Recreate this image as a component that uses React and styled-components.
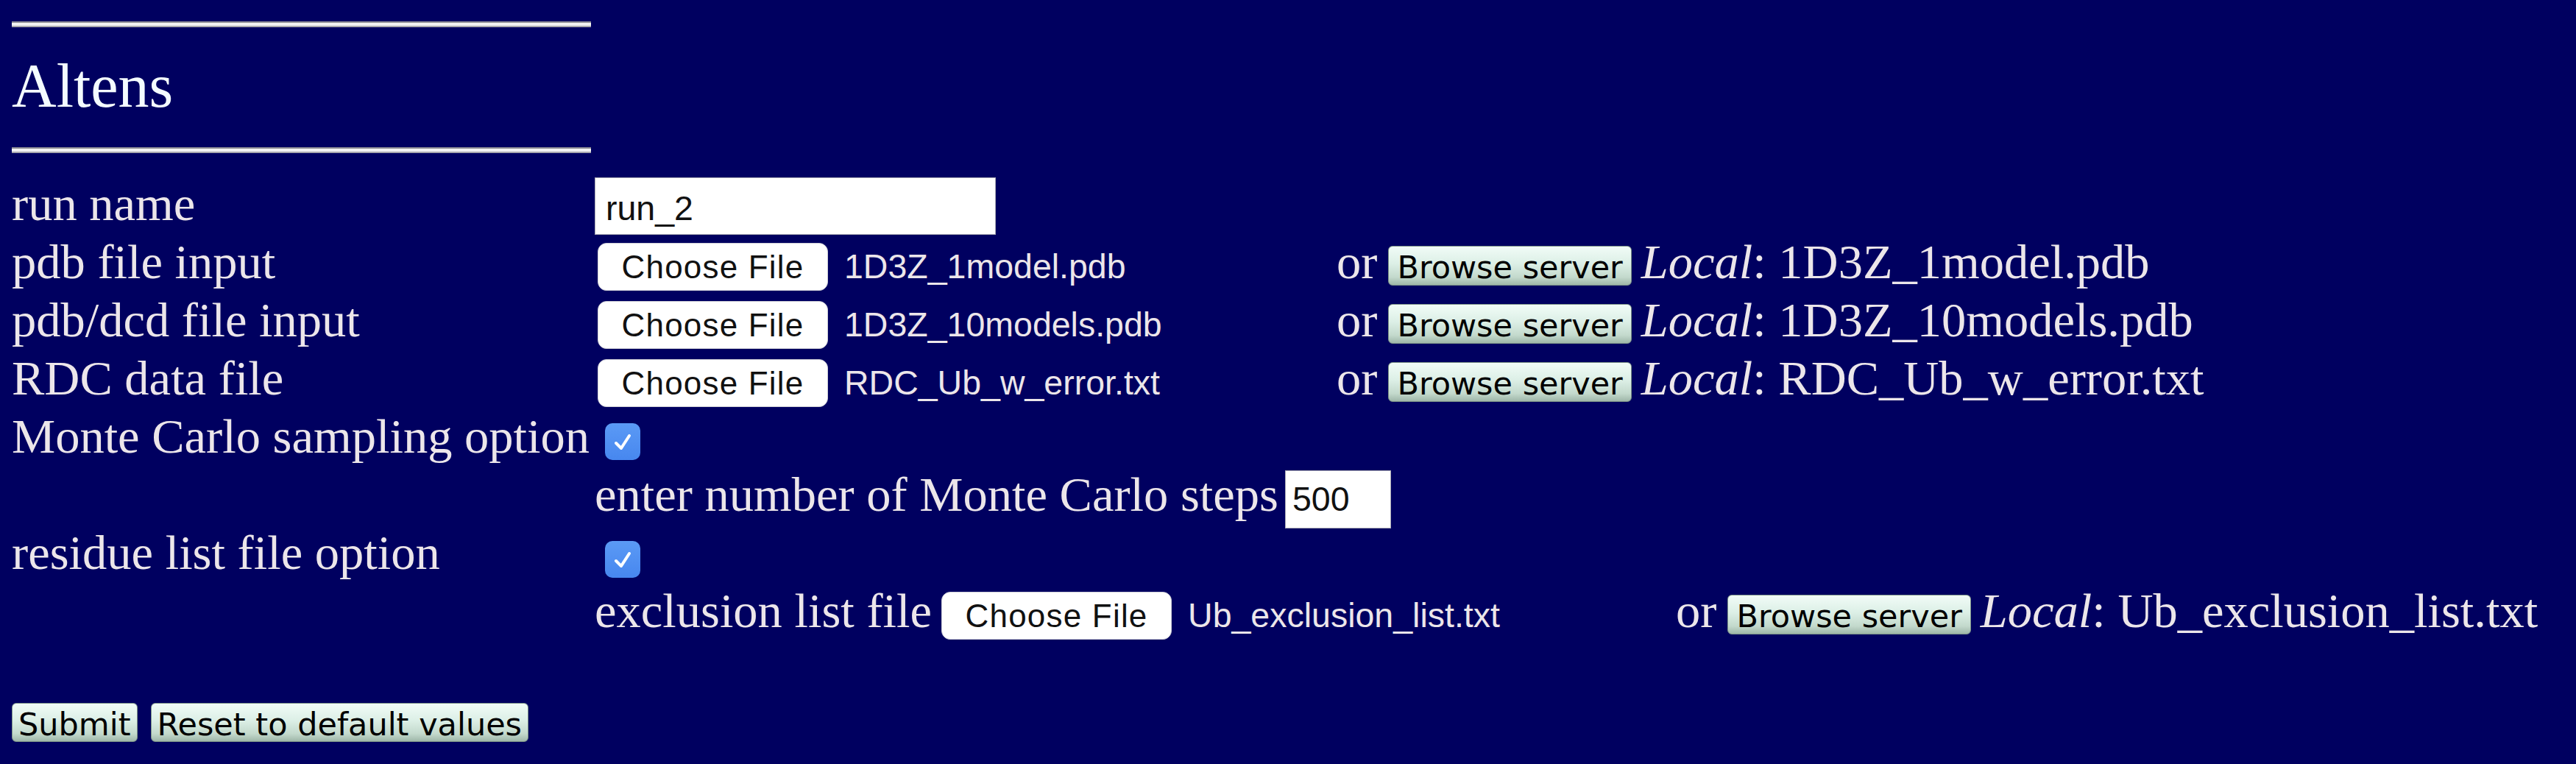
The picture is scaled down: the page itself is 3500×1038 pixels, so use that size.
import React from 'react'
import styled, { createGlobalStyle } from 'styled-components'

const GlobalStyle = createGlobalStyle`
  html, body {
    margin: 0;
    padding: 0;
    background: #000060;
  }
  body {
    font-family: "Liberation Serif", "Times New Roman", serif;
    color: #ece6ea;
  }
`

const Page = styled.div`
  min-height: 1038px;
  padding: 29px 0 0 16px;
  box-sizing: border-box;
`

const Rule = styled.hr`
  width: 787px;
  height: 8px;
  margin: 0;
  border: 0;
  background: linear-gradient(#8e8e96 0 2px, #f2f2f2 2px 6px, #a8a8ae 6px);
`

const Title = styled.h1`
  margin: 31px 0 35px;
  font-size: 84px;
  font-weight: normal;
  line-height: 97px;
  color: #f4fbff;
`

const Form = styled.form`
  margin-top: 33px;
`

const Row = styled.div`
  display: flex;
  align-items: flex-start;
  height: 79px;
`

const Label = styled.span`
  width: 792px;
  flex-shrink: 0;
  font-size: 66.5px;
  line-height: 72px;
  white-space: nowrap;
`

const Cell = styled.div`
  display: flex;
  align-items: baseline;
  white-space: nowrap;
`

const Words = styled.span`
  font-size: 66.5px;
  line-height: 72px;
  margin-left: ${p => p.$left || 0}px;
  margin-right: ${p => p.$right || 0}px;
`

const TextInput = styled.input`
  width: ${p => p.$w}px;
  height: ${p => p.$h}px;
  box-sizing: border-box;
  margin: 0 0 0 ${p => p.$left || 0}px;
  padding: ${p => p.$top || 0}px 10px 0 ${p => p.$pad}px;
  border: 1px solid #a9a9b4;
  border-radius: 0;
  background: #fff;
  color: #111;
  font-family: "Liberation Sans", Arial, sans-serif;
  font-size: 46.5px;
  outline: none;
`

const FilePicker = styled.span`
  display: inline-flex;
  align-items: baseline;
  width: ${p => p.$w}px;
  box-sizing: border-box;
  padding-left: 4px;
  margin-left: ${p => p.$left || 0}px;
`

const ChooseButton = styled.button`
  width: 313px;
  height: 65px;
  box-sizing: border-box;
  padding: 0;
  border: 1px solid #cfcfd6;
  border-radius: 12px;
  background: #fff;
  color: #111;
  font-family: "Liberation Sans", Arial, sans-serif;
  font-size: 44px;
  letter-spacing: 1.2px;
  line-height: 63px;
`

const FileName = styled.span`
  margin-left: 22px;
  font-family: "Liberation Sans", Arial, sans-serif;
  font-size: 46.5px;
`

const GlossButton = styled.button`
  height: ${p => p.$h}px;
  box-sizing: border-box;
  padding: 4px ${p => p.$px}px 0;
  border: 1px solid #7d9488;
  border-radius: 6px;
  background: linear-gradient(#f1fcf7 0%, #dcefe6 45%, #c3d9cc 80%, #9fb7a9 100%);
  color: #000;
  font-family: "DejaVu Sans", Verdana, sans-serif;
  font-size: 43px;
  line-height: 48px;
  white-space: nowrap;
`

const Check = styled.span`
  display: inline-flex;
  align-items: center;
  justify-content: center;
  width: 48px;
  height: 50px;
  margin: ${p => p.$top}px 0 0 14px;
  border-radius: 10px;
  background: linear-gradient(#5b9af5, #4787ef);
`

const Actions = styled.div`
  display: flex;
  gap: 18px;
  margin-top: 82px;
`

const files = [
  { label: 'pdb file input', name: '1D3Z_1model.pdb' },
  { label: 'pdb/dcd file input', name: '1D3Z_10models.pdb' },
  { label: 'RDC data file', name: 'RDC_Ub_w_error.txt' },
]

function Checkbox({ top }) {
  return (
    <Check $top={top}>
      <svg width="32" height="32" viewBox="0 0 32 32">
        <path d="M7 18 L14 25 L25 8" fill="none" stroke="#fff" strokeWidth="4" strokeLinecap="round" strokeLinejoin="round" />
      </svg>
    </Check>
  )
}

function FileChoice({ name, left, width = 1008 }) {
  return (
    <>
      <FilePicker $left={left} $w={width}>
        <ChooseButton type="button">Choose File</ChooseButton>
        <FileName>{name}</FileName>
      </FilePicker>
      <Words $right={15}>or</Words>
      <GlossButton type="button" $h={54} $px={11}>Browse server</GlossButton>
      <Words $left={13}><em>Local</em>: {name}</Words>
    </>
  )
}

export default function App() {
  return (
    <Page>
      <GlobalStyle />
      <Rule />
      <Title>Altens</Title>
      <Rule />
      <Form onSubmit={e => e.preventDefault()}>
        <Row>
          <Label>run name</Label>
          <Cell>
            <TextInput defaultValue="run_2" $w={545} $h={78} $pad={14} $top={5} />
          </Cell>
        </Row>
        {files.map(f => (
          <Row key={f.label}>
            <Label>{f.label}</Label>
            <Cell>
              <FileChoice name={f.name} />
            </Cell>
          </Row>
        ))}
        <Row>
          <Label>Monte Carlo sampling option</Label>
          <Checkbox top={18} />
        </Row>
        <Row>
          <Label />
          <Cell>
            <Words>enter number of Monte Carlo steps</Words>
            <TextInput defaultValue="500" $w={144} $h={79} $pad={9} $left={9} />
          </Cell>
        </Row>
        <Row>
          <Label>residue list file option</Label>
          <Checkbox top={20} />
        </Row>
        <Row>
          <Label />
          <Cell>
            <Words>exclusion list file</Words>
            <FileChoice name="Ub_exclusion_list.txt" left={9} width={1002} />
          </Cell>
        </Row>
        <Actions>
          <GlossButton type="submit" $h={53} $px={8}>Submit</GlossButton>
          <GlossButton type="button" $h={53} $px={8}>Reset to default values</GlossButton>
        </Actions>
      </Form>
    </Page>
  )
}
